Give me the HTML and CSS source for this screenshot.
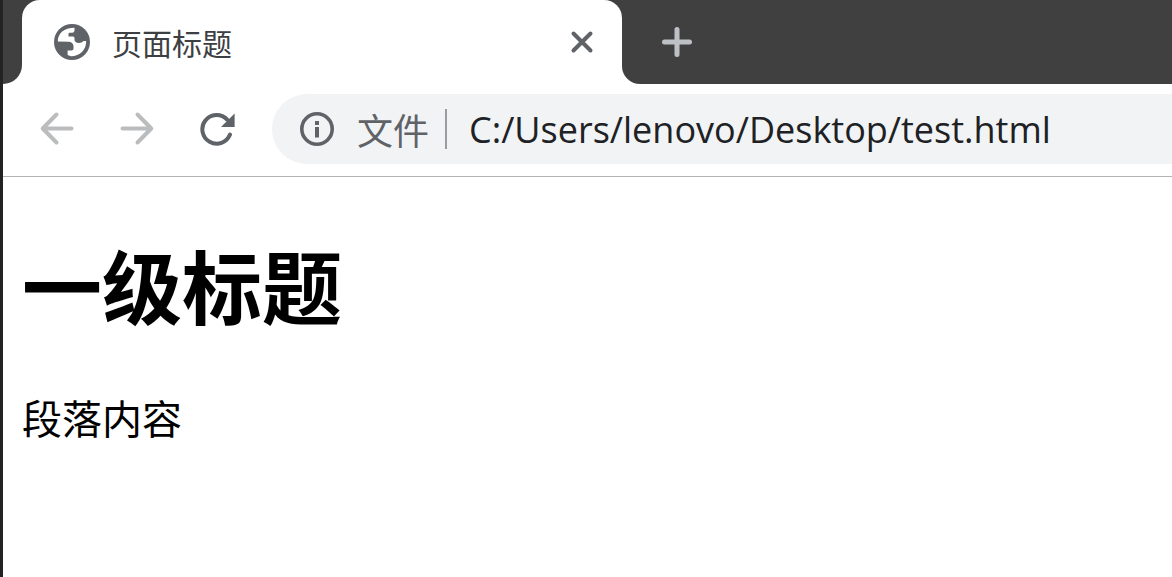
FILE: index.html
```html
<!DOCTYPE html>
<html lang="zh-CN">
<head>
<meta charset="utf-8">
<meta name="viewport" content="width=device-width, initial-scale=1">
<title>页面标题</title>
<link rel="stylesheet" href="styles.css">
</head>
<body>
<div class="window">
  <div class="tab-strip">
    <div class="strip-start"></div>
    <div class="tab">
      <svg class="favicon" viewBox="0 0 36 36" aria-hidden="true">
        <circle cx="18" cy="18" r="18" fill="#5f6368"/>
        <path d="M3.800 17.500C3.800 9.500 10 3.800 20.500 3.800V6.500Q20.500 8.800 18 8.800H15.500Q14.500 8.800 14.500 10V12.500H19Q20.500 12.500 20.500 14V16Q21 18.800 25 19Q28 19 29.500 17H32.200C32.200 26 26 32.200 17 32.200L13.600 31V26.500H17.500Q19.500 26.500 19.500 24.500V22Q19 18 14.500 17.800Z" fill="#fff"/>
      </svg>
      <span class="tab-title">页面标题</span>
      <button class="icon-button" type="button" aria-label="关闭">
        <svg class="close-icon" viewBox="0 0 24 24" aria-hidden="true"><path d="M3.500 3.500L20.500 20.500M20.500 3.500L3.500 20.500"/></svg>
      </button>
    </div>
    <div class="strip-end">
      <button class="icon-button" type="button" aria-label="新标签页">
        <svg class="plus-icon" viewBox="0 0 30 30" aria-hidden="true"><path d="M15 2.500V27.500M2.500 15H27.500"/></svg>
      </button>
    </div>
  </div>
  <div class="toolbar">
    <nav class="nav">
      <button class="icon-button" type="button" aria-label="后退">
        <svg class="nav-icon" viewBox="0 0 36 36" aria-hidden="true"><path d="M32.500 17.500H4M17.500 3.500L3.700 17.500L17.500 31.500"/></svg>
      </button>
      <button class="icon-button" type="button" aria-label="前进">
        <svg class="nav-icon" viewBox="0 0 36 36" aria-hidden="true"><path d="M3.500 17.500H32M18.500 3.500L32.300 17.500L18.500 31.500"/></svg>
      </button>
      <button class="icon-button" type="button" aria-label="重新加载">
        <svg class="nav-icon reload" viewBox="0 0 36 36" aria-hidden="true"><path d="M28 8.500A14.300 14.300 0 1 0 31 23.500"/><path class="reload-head" d="M35.600 2.500V16H22Z"/></svg>
      </button>
    </nav>
    <div class="address">
      <svg class="info-icon" viewBox="0 0 34 34" aria-hidden="true">
        <circle cx="17" cy="17" r="15.200" fill="none" stroke="#5f6368" stroke-width="3.600"/>
        <path d="M15 9h4v4h-4zM15 15h4v10.500h-4z" fill="#5f6368"/>
      </svg>
      <label class="scheme" for="url">文件</label>
      <input class="url" id="url" type="text" value="C:/Users/lenovo/Desktop/test.html" spellcheck="false">
    </div>
  </div>
  <main class="page">
    <h1 class="heading">一级标题</h1>
    <p class="paragraph">段落内容</p>
  </main>
</div>
</body>
</html>
```
FILE: styles.css
```css
* { box-sizing: border-box; }
body {
  margin: 0;
  background: #fff;
  font-family: "Noto Sans", "Noto Sans CJK SC", sans-serif;
}
.window {
  min-height: 100vh;
  border-left: 3px solid #232323;
}
.tab-strip {
  display: flex;
  height: 84px;
  background: linear-gradient(#404040 50%, #fff 50%);
}
.strip-start {
  width: 19px;
  background: #404040;
  border-bottom-right-radius: 20px;
}
.tab {
  display: flex;
  align-items: center;
  flex: 0 1 600px;
  padding: 0 28px 0 32px;
  background: #fff;
  border-radius: 18px 18px 0 0;
}
.favicon { width: 36px; height: 36px; flex: none; }
.tab-title {
  flex: 1;
  margin-left: 22px;
  font-family: "Noto Sans CJK SC", sans-serif;
  font-size: 30px;
  line-height: 40px;
  color: #3c4043;
}
.icon-button {
  display: flex;
  padding: 0;
  border: 0;
  background: none;
}
.icon-button svg { fill: none; stroke-linecap: round; stroke-linejoin: round; }
.close-icon { width: 24px; height: 24px; stroke: #5f6368; stroke-width: 4; }
.strip-end {
  display: flex;
  align-items: center;
  flex: 1;
  padding-left: 40px;
  background: #404040;
  border-bottom-left-radius: 18px;
}
.plus-icon { width: 30px; height: 30px; stroke: #bdc1c6; stroke-width: 5; }
.toolbar {
  display: flex;
  align-items: center;
  padding: 10px 0 12px 36px;
  border-bottom: 1px solid #b3b3b3;
}
.nav { display: flex; gap: 44px; }
.nav-icon { width: 36px; height: 36px; stroke: #babcbe; stroke-width: 4; }
.reload { stroke: #5f6368; }
.icon-button .reload-head { fill: #5f6368; stroke: none; }
.address {
  display: flex;
  align-items: center;
  flex: 1;
  height: 70px;
  margin-left: 37px;
  padding-left: 28px;
  background: #f1f3f4;
  border-radius: 35px 0 0 35px;
}
.info-icon { width: 34px; height: 34px; flex: none; }
.scheme {
  flex: none;
  margin-left: 23px;
  padding-right: 16px;
  border-right: 2px solid #9a9da0;
  font-family: "Noto Sans CJK SC", sans-serif;
  font-size: 36px;
  line-height: 40px;
  color: #5f6368;
}
.url {
  flex: 1;
  min-width: 0;
  padding: 0 0 0 22px;
  border: 0;
  outline: 0;
  background: none;
  font-family: "Open Sans", sans-serif;
  font-size: 36px;
  color: #202124;
}
.page { padding: 46px 19px; color: #000; font-family: "Noto Sans CJK SC", sans-serif; }
.heading { margin: 0; font-size: 80px; line-height: 120px; font-weight: 700; }
.paragraph { margin: 44px 0 0; font-size: 40px; line-height: 60px; }
```
